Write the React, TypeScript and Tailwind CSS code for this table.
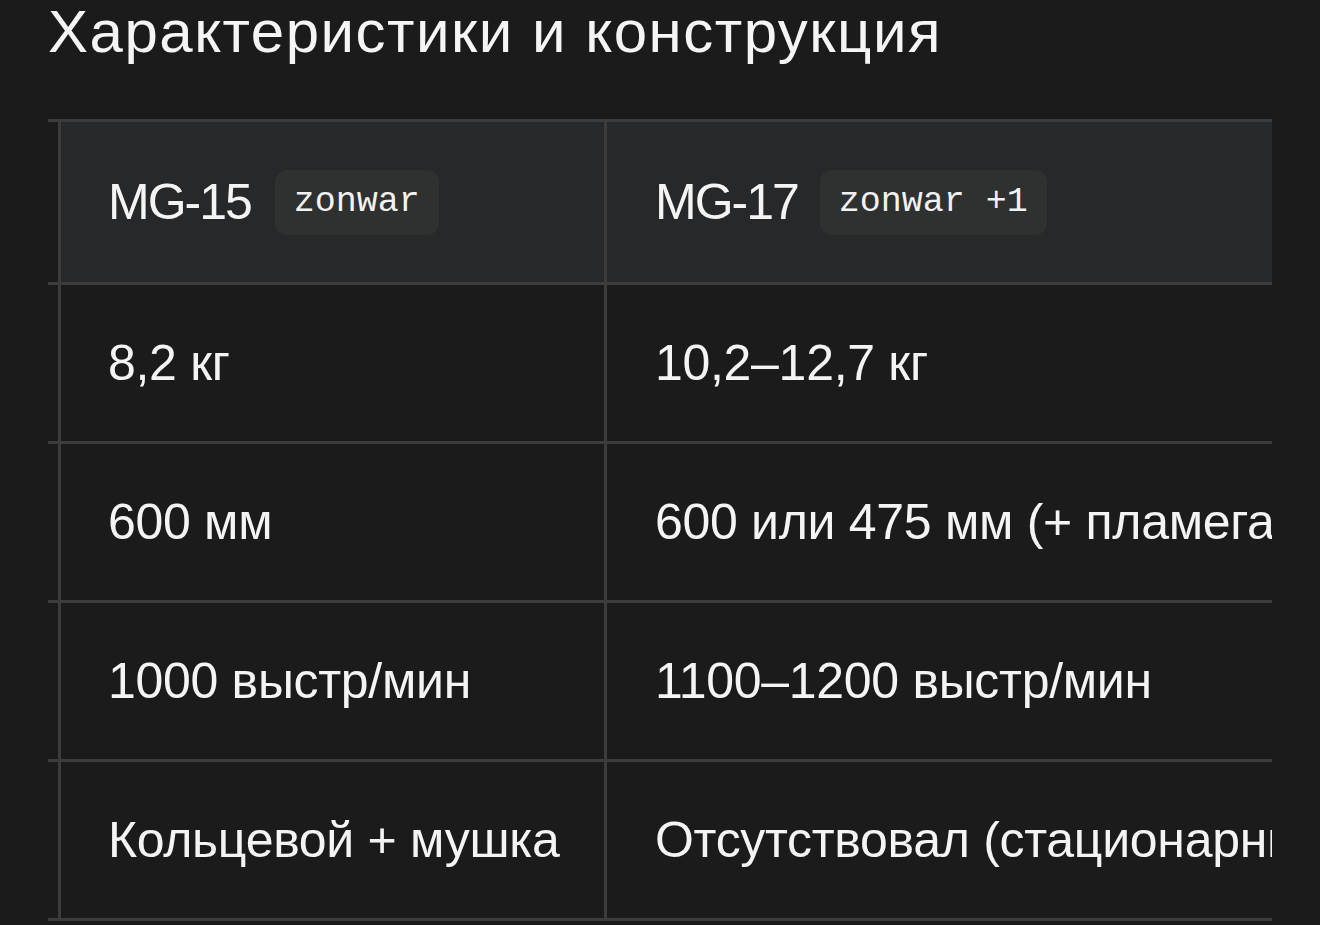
import React from 'react';

const rows: [string, string][] = [
  ['8,2 кг', '10,2–12,7 кг'],
  ['600 мм', '600 или 475 мм (+ пламегаситель)'],
  ['1000 выстр/мин', '1100–1200 выстр/мин'],
  ['Кольцевой + мушка', 'Отсутствовал (стационарный монтаж)'],
];

function Badge({ children }: { children: React.ReactNode }) {
  return (
    <span className="rounded-[12px] bg-[#2f3030] px-[19px] py-[11px] font-['Liberation_Mono',monospace] text-[35px] leading-[43px] text-[#f2f2f2]">
      {children}
    </span>
  );
}

export default function App() {
  return (
    <div className="min-h-[925px] bg-[#1b1b1b] px-[48px] pt-[2px] font-['Liberation_Sans',Arial,sans-serif] text-[#f4f4f4]">
      <h2 className="text-[60px] leading-[60px] tracking-[1.5px] text-[#f5f5f5]">
        Характеристики и конструкция
      </h2>

      <div className="mt-[57px] w-[1224px] overflow-hidden border-t-[3px] border-[#3c3c3c]">
        {/* header */}
        <div className="flex h-[163px] border-b-[3px] border-[#3c3c3c] bg-[#27282a]">
          <div className="w-[10px] shrink-0 bg-[#1b1b1b]" />
          <div className="flex w-[546px] shrink-0 items-center gap-[24px] border-l-[3px] border-[#3c3c3c] pl-[47px]">
            <span className="text-[50px] tracking-[-2px]">MG-15</span>
            <Badge>zonwar</Badge>
          </div>
          <div className="flex shrink-0 items-center gap-[22px] whitespace-nowrap border-l-[3px] border-[#3c3c3c] pl-[48px]">
            <span className="text-[50px] tracking-[-2px]">MG-17</span>
            <Badge>zonwar +1</Badge>
          </div>
        </div>

        {rows.map(([a, b]) => (
          <div key={a} className="flex h-[159px] border-b-[3px] border-[#3c3c3c]">
            <div className="w-[10px] shrink-0" />
            <div className="flex w-[546px] shrink-0 items-center border-l-[3px] border-[#3c3c3c] pl-[47px] text-[50px] tracking-[-0.3px]">
              {a}
            </div>
            <div className="flex shrink-0 items-center whitespace-nowrap border-l-[3px] border-[#3c3c3c] pl-[48px] text-[50px] tracking-[-0.3px]">
              {b}
            </div>
          </div>
        ))}
      </div>
    </div>
  );
}
